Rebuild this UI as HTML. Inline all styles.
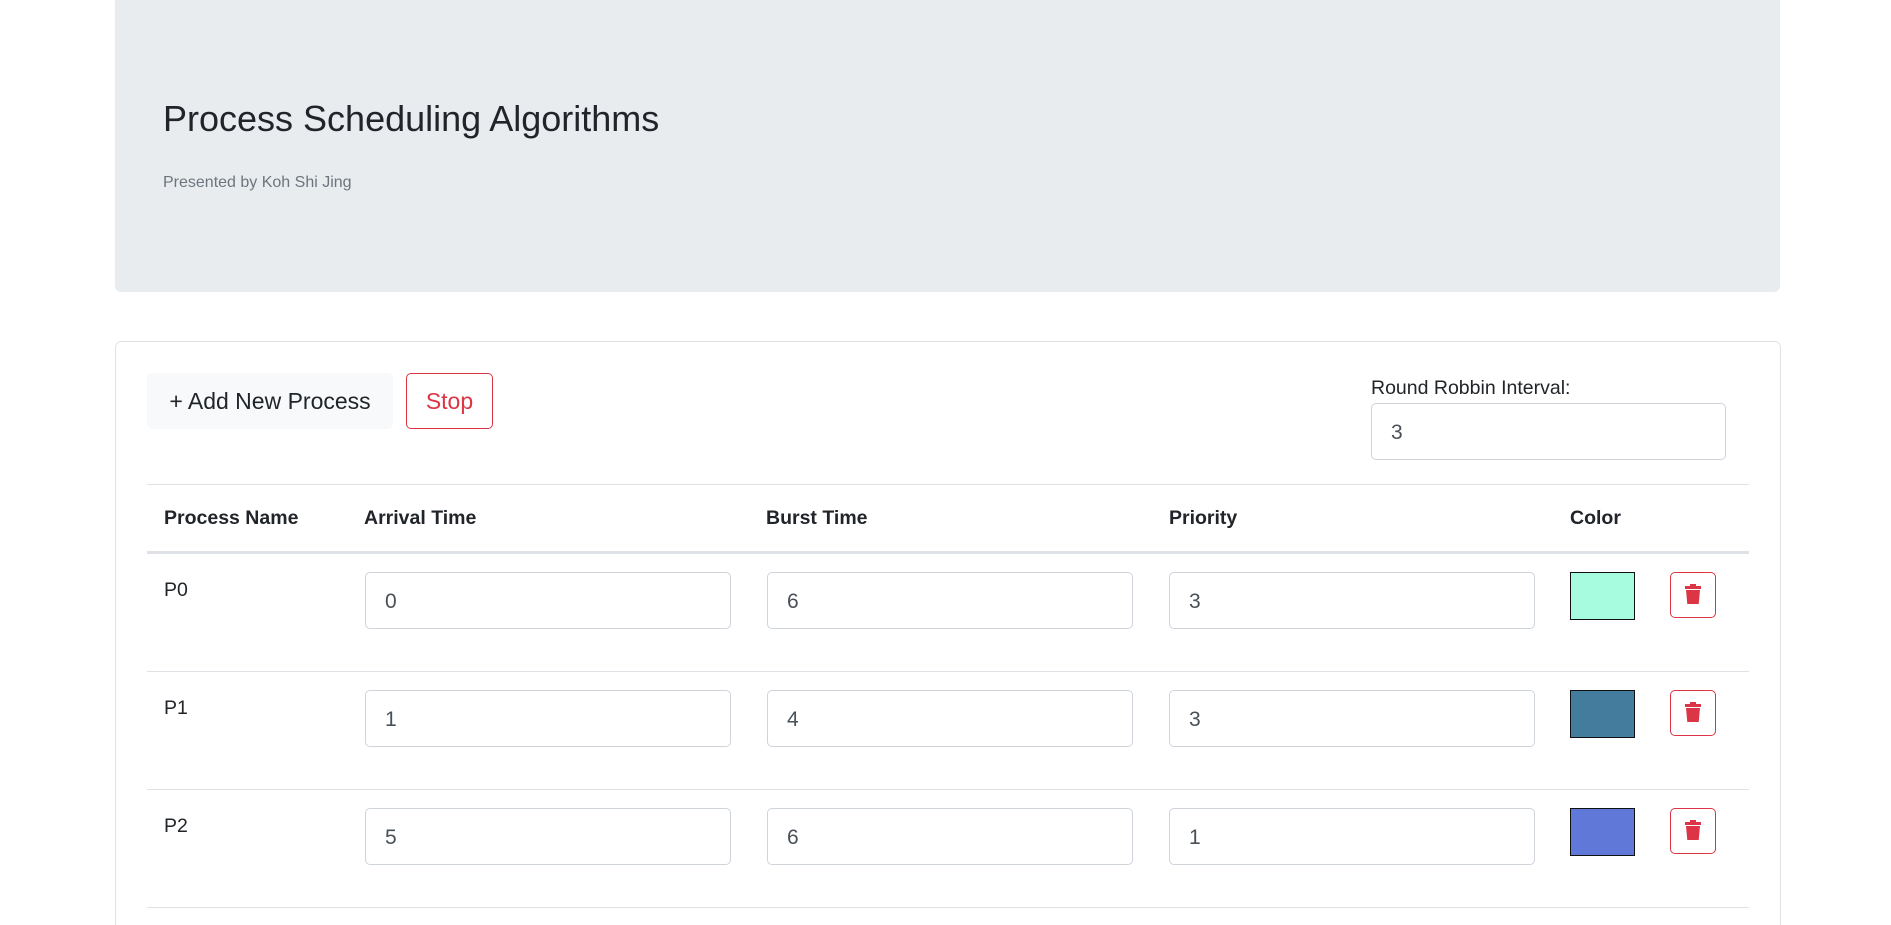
<!DOCTYPE html>
<html style="height:925px;overflow:hidden"><head><style>
body{margin:0;width:1891px;height:925px;overflow:hidden;background:#fff;font-family:"Liberation Sans",sans-serif;color:#212529;position:relative}
.a{position:absolute}
.jumbo{left:115px;top:-5px;width:1665px;height:297px;background:#e9ecef;border-radius:6px}
.card{left:115px;top:341px;width:1664px;height:620px;border:1px solid #dfe2e6;border-radius:6px}
.inp{position:absolute;border:1px solid #ced4da;border-radius:5px;box-sizing:border-box;height:57px;font-size:21px;color:#495057;line-height:57px;padding-left:19px}
.hl{position:absolute;left:147px;width:1602px;height:1px;background:#dee2e6}
.th{position:absolute;top:507px;font-weight:bold;font-size:19.5px}
.pn{position:absolute;left:164px;font-size:19.5px}
.sw{position:absolute;left:1570px;width:65px;height:48px;border:1.5px solid #111;box-sizing:border-box}
.del{position:absolute;left:1670px;width:46px;height:46px;border:1px solid #dc3545;border-radius:5px;box-sizing:border-box}
</style></head><body>
<div class="a jumbo"></div>
<div class="a" style="left:163px;top:98px;font-size:36px">Process Scheduling Algorithms</div>
<div class="a" style="left:163px;top:174px;font-size:16px;color:#6c757d">Presented by Koh Shi Jing</div>
<div class="a card"></div>
<div class="a" style="left:147px;top:373px;width:246px;height:56px;background:#f8f9fa;border-radius:5px;font-size:23px;line-height:56px;text-align:center">+ Add New Process</div>
<div class="a" style="left:406px;top:373px;width:87px;height:56px;border:1px solid #dc3545;border-radius:5px;box-sizing:border-box;font-size:23px;line-height:54px;text-align:center;color:#dc3545">Stop</div>
<div class="a" style="left:1371px;top:377px;font-size:19.5px">Round Robbin Interval:</div>
<div class="inp" style="left:1371px;top:403px;width:355px">3</div>
<div class="hl" style="top:484px"></div>
<div class="th" style="left:164px">Process Name</div>
<div class="th" style="left:364px">Arrival Time</div>
<div class="th" style="left:766px">Burst Time</div>
<div class="th" style="left:1169px">Priority</div>
<div class="th" style="left:1570px">Color</div>
<div class="hl" style="top:551px;height:3px"></div>

<div class="pn" style="top:579px">P0</div>
<div class="inp" style="left:365px;top:572px;width:366px">0</div>
<div class="inp" style="left:767px;top:572px;width:366px">6</div>
<div class="inp" style="left:1169px;top:572px;width:366px">3</div>
<div class="sw" style="top:572px;background:#a7fcdf"></div>
<div class="del" style="top:572px"><svg width="44" height="44" viewBox="0 0 44 44"><path d="M14 13h16v3H14z M19 11h6v2h-6z M15 17h14l-1.3 14H16.3z" fill="#dc3545"/></svg></div>
<div class="hl" style="top:671px"></div>

<div class="pn" style="top:697px">P1</div>
<div class="inp" style="left:365px;top:690px;width:366px">1</div>
<div class="inp" style="left:767px;top:690px;width:366px">4</div>
<div class="inp" style="left:1169px;top:690px;width:366px">3</div>
<div class="sw" style="top:690px;background:#437c9c"></div>
<div class="del" style="top:690px"><svg width="44" height="44" viewBox="0 0 44 44"><path d="M14 13h16v3H14z M19 11h6v2h-6z M15 17h14l-1.3 14H16.3z" fill="#dc3545"/></svg></div>
<div class="hl" style="top:789px"></div>

<div class="pn" style="top:815px">P2</div>
<div class="inp" style="left:365px;top:808px;width:366px">5</div>
<div class="inp" style="left:767px;top:808px;width:366px">6</div>
<div class="inp" style="left:1169px;top:808px;width:366px">1</div>
<div class="sw" style="top:808px;background:#6079d9"></div>
<div class="del" style="top:808px"><svg width="44" height="44" viewBox="0 0 44 44"><path d="M14 13h16v3H14z M19 11h6v2h-6z M15 17h14l-1.3 14H16.3z" fill="#dc3545"/></svg></div>
<div class="hl" style="top:907px"></div>
</body></html>
